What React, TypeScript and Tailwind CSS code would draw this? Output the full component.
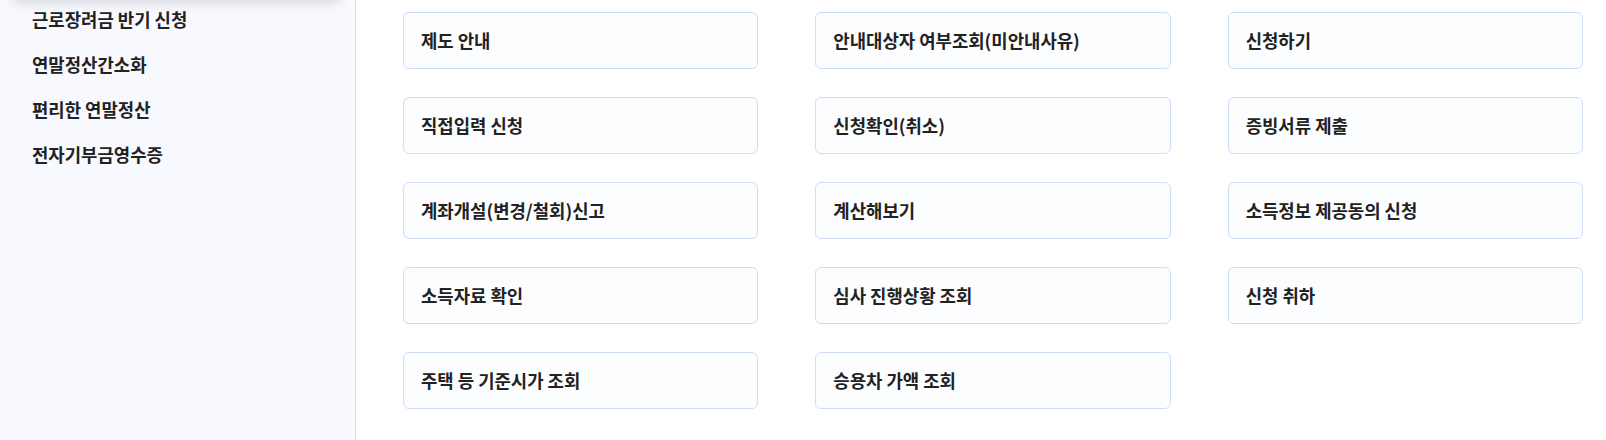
import React from "react";

const side = ["근로장려금 반기 신청", "연말정산간소화", "편리한 연말정산", "전자기부금영수증"];
const cards = [
  "제도 안내",
  "안내대상자 여부조회(미안내사유)",
  "신청하기",
  "직접입력 신청",
  "신청확인(취소)",
  "증빙서류 제출",
  "계좌개설(변경/철회)신고",
  "계산해보기",
  "소득정보 제공동의 신청",
  "소득자료 확인",
  "심사 진행상황 조회",
  "신청 취하",
  "주택 등 기준시가 조회",
  "승용차 가액 조회",
];

export default function App() {
  return (
    <div
      className="flex h-[440px] w-[1606px] overflow-hidden bg-white text-[#222222]"
      style={{ fontFamily: '"Noto Sans CJK KR", "Noto Sans", sans-serif' }}
    >
      <aside className="relative w-[356px] shrink-0 border-r border-[#d6e2f5] bg-[#f7f9ff]">
        <div className="absolute left-[12px] right-[14px] top-[-30px] h-[30px] rounded-b-lg bg-white shadow-[0_3px_12px_rgba(0,0,0,0.14)]" />
        <ul className="-mt-[3px] flex flex-col">
          {side.map((s) => (
            <li key={s} className="flex h-[45px] items-center pl-[32px] text-[17.8px] font-semibold leading-none">
              {s}
            </li>
          ))}
        </ul>
      </aside>
      <main className="flex-1 pl-[47px] pr-[23px] pt-[12px]">
        <div className="grid grid-cols-3 gap-x-[57px] gap-y-[28px]">
          {cards.map((c) => (
            <div
              key={c}
              className="flex h-[57px] items-center rounded-[6px] border border-[#cfddf9] bg-[#fcfdff] pl-[17px] text-[17.8px] font-semibold leading-none"
            >
              {c}
            </div>
          ))}
        </div>
      </main>
    </div>
  );
}
